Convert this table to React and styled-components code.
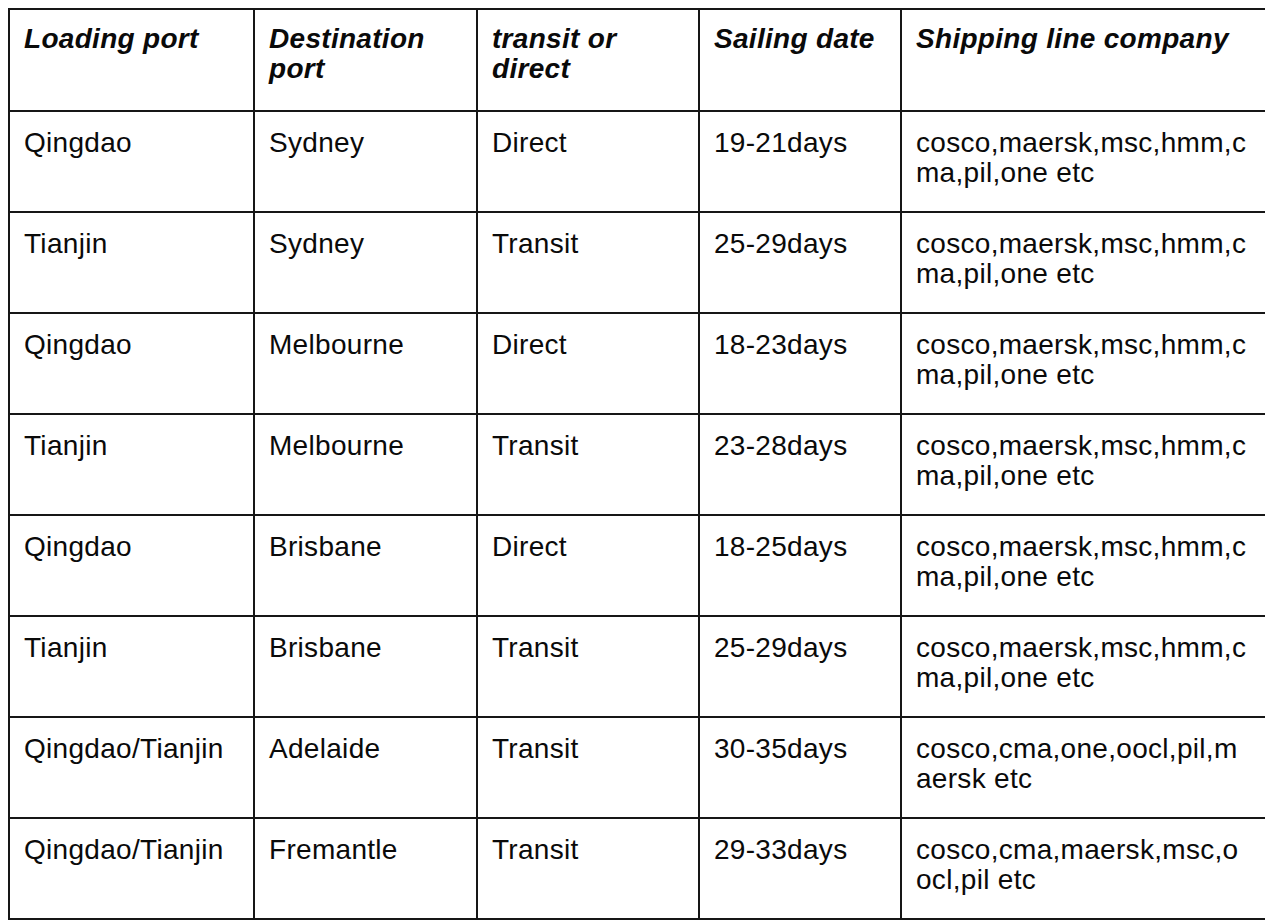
import React from "react";
import styled, { createGlobalStyle } from "styled-components";

const GlobalStyle = createGlobalStyle`
  html, body {
    margin: 0;
    padding: 0;
    background: #ffffff;
    overflow: hidden;
  }
  body {
    padding: 8px 0 0 8px;
    font-family: "Liberation Sans", Arial, sans-serif;
    color: #0a0a0a;
  }
`;

const Table = styled.table`
  border-collapse: collapse;
  table-layout: fixed;
  width: 1280px;
  font-size: 28px;
  letter-spacing: 0.3px;
  line-height: 30px;
`;

const HeadCell = styled.th`
  border: 2px solid #161616;
  padding: 14px 14px 0 14px;
  height: 102px;
  box-sizing: border-box;
  vertical-align: top;
  text-align: left;
  font-weight: bold;
  font-style: italic;
`;

const Cell = styled.td`
  border: 2px solid #161616;
  padding: 16px 14px 0 14px;
  height: 101px;
  box-sizing: border-box;
  vertical-align: top;
  font-weight: normal;
  white-space: nowrap;
`;

const columns = [
  { label: "Loading port", width: 245 },
  { label: "Destination port", width: 223 },
  { label: "transit or direct", width: 222 },
  { label: "Sailing date", width: 202 },
  { label: "Shipping line company", width: 388 },
];

const ships = ["cosco,maersk,msc,hmm,c", "ma,pil,one etc"];

const rows = [
  ["Qingdao", "Sydney", "Direct", "19-21days", ships],
  ["Tianjin", "Sydney", "Transit", "25-29days", ships],
  ["Qingdao", "Melbourne", "Direct", "18-23days", ships],
  ["Tianjin", "Melbourne", "Transit", "23-28days", ships],
  ["Qingdao", "Brisbane", "Direct", "18-25days", ships],
  ["Tianjin", "Brisbane", "Transit", "25-29days", ships],
  ["Qingdao/Tianjin", "Adelaide", "Transit", "30-35days", ["cosco,cma,one,oocl,pil,m", "aersk etc"]],
  ["Qingdao/Tianjin", "Fremantle", "Transit", "29-33days", ["cosco,cma,maersk,msc,o", "ocl,pil etc"]],
];

const CellText = ({ value }) =>
  Array.isArray(value)
    ? value.map((line, k) => (
        <React.Fragment key={k}>
          {k > 0 && <br />}
          {line}
        </React.Fragment>
      ))
    : value;

export default function App() {
  return (
    <>
      <GlobalStyle />
      <Table>
        <colgroup>
          {columns.map((c) => (
            <col key={c.label} style={{ width: c.width }} />
          ))}
        </colgroup>
        <thead>
          <tr>
            {columns.map((c) => (
              <HeadCell key={c.label}>{c.label}</HeadCell>
            ))}
          </tr>
        </thead>
        <tbody>
          {rows.map((r, i) => (
            <tr key={i}>
              {r.map((v, j) => (
                <Cell key={j}>
                  <CellText value={v} />
                </Cell>
              ))}
            </tr>
          ))}
        </tbody>
      </Table>
    </>
  );
}
